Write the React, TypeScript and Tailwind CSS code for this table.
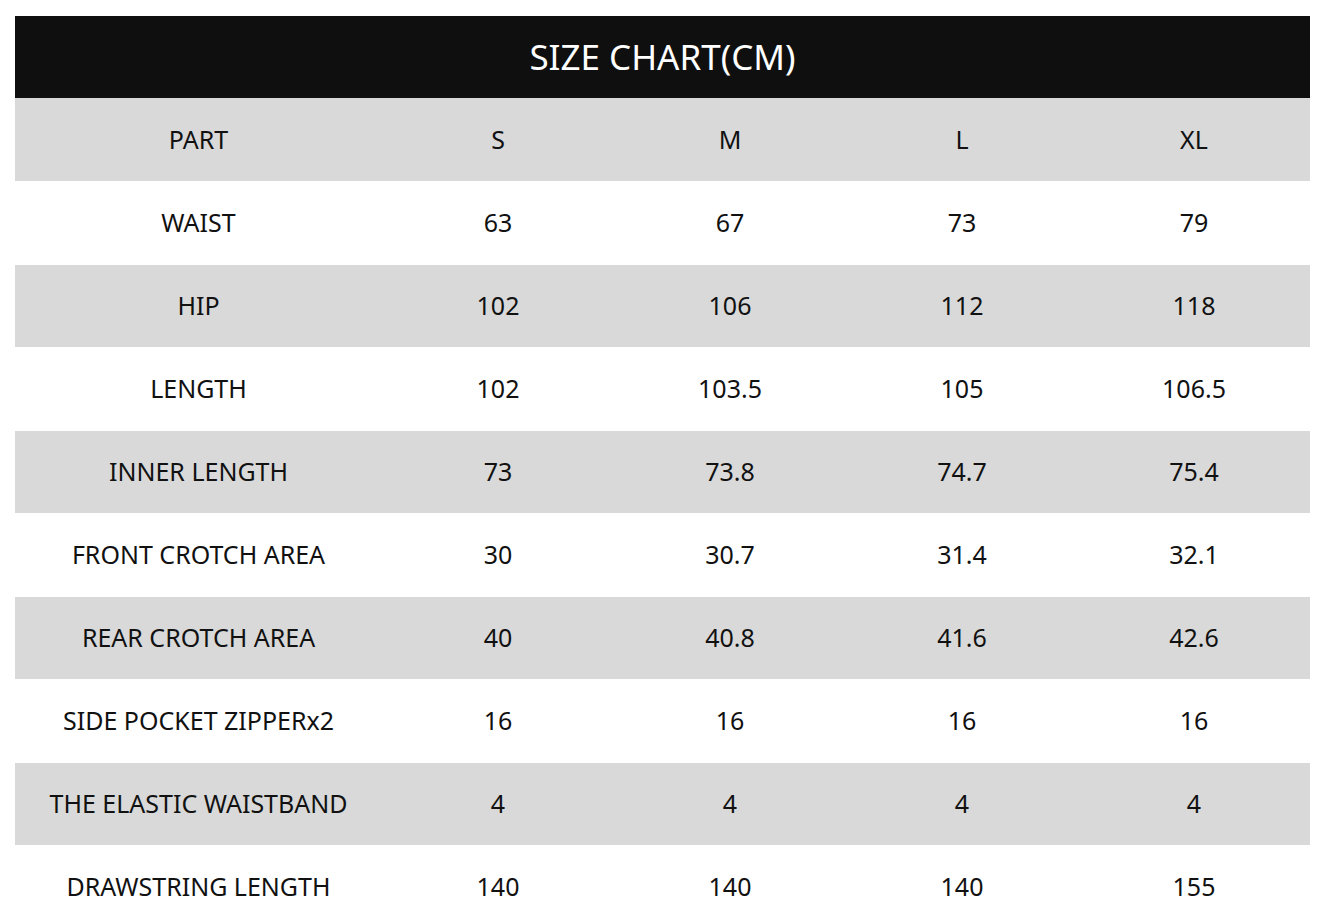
import React from 'react';

const sizes = ['S', 'M', 'L', 'XL'];

const rows: [string, string[]][] = [
  ['WAIST', ['63', '67', '73', '79']],
  ['HIP', ['102', '106', '112', '118']],
  ['LENGTH', ['102', '103.5', '105', '106.5']],
  ['INNER LENGTH', ['73', '73.8', '74.7', '75.4']],
  ['FRONT CROTCH AREA', ['30', '30.7', '31.4', '32.1']],
  ['REAR CROTCH AREA', ['40', '40.8', '41.6', '42.6']],
  ['SIDE POCKET ZIPPERx2', ['16', '16', '16', '16']],
  ['THE ELASTIC WAISTBAND', ['4', '4', '4', '4']],
  ['DRAWSTRING LENGTH', ['140', '140', '140', '155']],
];

function Row({ label, values, gray, height }: { label: string; values: string[]; gray: boolean; height: string }) {
  return (
    <div className={`flex items-center ${height} ${gray ? 'bg-[#d9d9d9]' : 'bg-white'}`}>
      <div className="w-[367px] text-center">{label}</div>
      {values.map((v, i) => (
        <div key={i} className="w-[232px] text-center">
          {v}
        </div>
      ))}
    </div>
  );
}

export default function App() {
  return (
    <div className="bg-white min-h-screen pt-4 px-[15px] text-[#111] text-[25px] font-['Noto_Sans',sans-serif]">
      <div className="w-[1295px]">
        <div className="h-[82px] bg-[#0f0f0f] flex items-center justify-center text-white text-[35px]">
          SIZE CHART(CM)
        </div>
        <Row label="PART" values={sizes} gray height="h-[83px]" />
        {rows.map(([label, values], i) => (
          <Row
            key={label}
            label={label}
            values={values}
            gray={i % 2 === 1}
            height={i % 2 === 1 ? 'h-[82px]' : 'h-[84px]'}
          />
        ))}
      </div>
    </div>
  );
}
